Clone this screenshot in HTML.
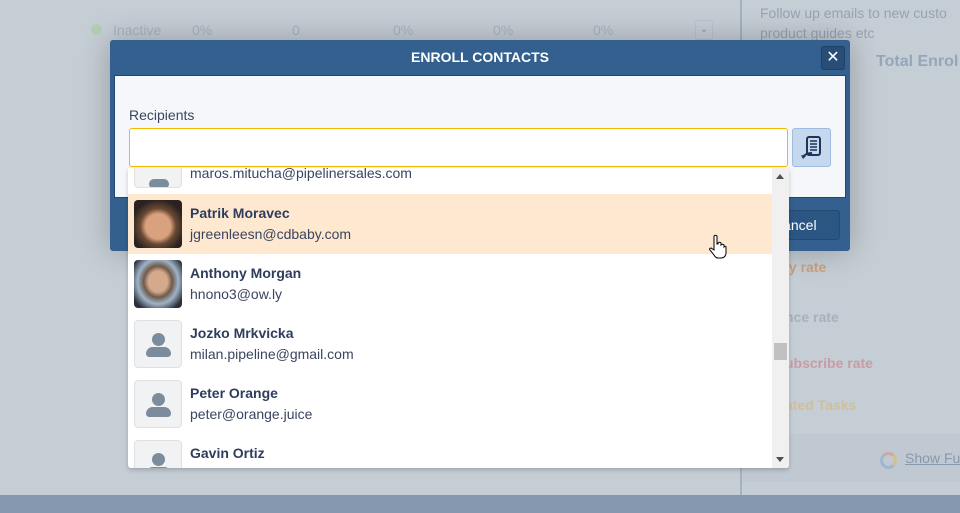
<!DOCTYPE html>
<html><head><meta charset="utf-8"><style>
*{margin:0;padding:0;box-sizing:border-box}
body{width:960px;height:513px;overflow:hidden;background:#c5cdd5;font-family:"Liberation Sans",sans-serif;position:relative}
.abs{position:absolute;white-space:nowrap}
.t{color:#a8b3bf;font-size:14px}
.item{position:absolute;left:0;width:644px;height:60px}
.av{position:absolute;left:6px;top:6px;width:48px;height:48px;border-radius:4px;background:#f1f2f3;border:1px solid #dfe1e3;overflow:hidden}
.nm{position:absolute;left:62px;top:11px;font-weight:bold;font-size:14px;color:#2f3d5c}
.em{position:absolute;left:62px;top:32px;font-size:14px;color:#3a4560}
</style></head><body>
<div class="abs" style="left:91px;top:24px;width:11px;height:11px;border-radius:50%;background:#b5cdb5"></div>
<div class="abs t" style="left:113px;top:22px">Inactive</div>
<div class="abs t" style="left:192px;top:22px">0%</div>
<div class="abs t" style="left:292px;top:22px">0</div>
<div class="abs t" style="left:393px;top:22px">0%</div>
<div class="abs t" style="left:493px;top:22px">0%</div>
<div class="abs t" style="left:593px;top:22px">0%</div>
<div class="abs" style="left:695px;top:20px;width:18px;height:20px;border:1px solid #b9c2cc;border-radius:3px;color:#8896a6;font-size:10px;text-align:center;line-height:18px">⌄</div>
<div class="abs" style="left:740px;top:0;width:2px;height:495px;background:#a3b1c1"></div>
<div class="abs" style="left:760px;top:3px;color:#98a3b0;font-size:14px;line-height:20px">Follow up emails to new custo<br>product guides etc</div>
<div class="abs" style="left:876px;top:53px;color:#95a6ba;font-size:16px;font-weight:bold">Total Enrol</div>
<div class="abs" style="left:785px;top:259px;color:#c9a07e;font-size:14px;font-weight:bold">ly rate</div>
<div class="abs" style="left:785px;top:309px;color:#a8b0ba;font-size:14px;font-weight:bold">nce rate</div>
<div class="abs" style="left:785px;top:355px;color:#c89ca4;font-size:14px;font-weight:bold">ubscribe rate</div>
<div class="abs" style="left:785px;top:397px;color:#d0c09a;font-size:14px;font-weight:bold">ated Tasks</div>
<div class="abs" style="left:742px;top:434px;width:218px;height:48px;background:#c0c8d2"></div>
<div class="abs" style="left:880px;top:452px;width:17px;height:17px;border-radius:50%;border:3px solid #9fb6cf;border-top-color:#cfa7a0;border-right-color:#d4c089"></div>
<div class="abs" style="left:905px;top:450px;color:#8898ad;font-size:14px;text-decoration:underline">Show Fu</div>
<div class="abs" style="left:0;top:495px;width:960px;height:18px;background:#8598b0"></div>
<div class="abs" style="left:110px;top:40px;width:740px;height:211px;background:#33608e;border-radius:3px;box-shadow:0 0 30px rgba(0,0,0,.25)"></div>
<div class="abs" style="left:110px;top:40px;width:740px;height:34px;line-height:34px;text-align:center;color:#fff;font-size:14px;font-weight:bold">ENROLL CONTACTS</div>
<div class="abs" style="left:821px;top:46px;width:24px;height:24px;background:#284e78;border:1px solid #1f3f63;border-radius:3px;color:#fff;text-align:center;line-height:22px;font-size:16px">✕</div>
<div class="abs" style="left:114px;top:75px;width:732px;height:123px;background:#f5f7fb;border:1px solid #23466d"></div>
<div class="abs" style="left:129px;top:107px;color:#3a4560;font-size:14px">Recipients</div>
<div class="abs" style="left:129px;top:128px;width:659px;height:39px;background:#fff;border:1px solid #f3b800;border-radius:3px"></div>
<div class="abs" style="left:792px;top:128px;width:39px;height:39px;background:#c5d8ee;border:1px solid #9ebde0;border-radius:3px">
<svg width="37" height="37" viewBox="0 0 37 37"><rect x="14" y="8" width="13" height="18" rx="2" fill="none" stroke="#1d3557" stroke-width="2"/><path d="M17 12h7M17 15h7M17 18h7M17 21h7" stroke="#1d3557" stroke-width="1.5"/><path d="M19 24c-4 0-7 1-9 4" fill="none" stroke="#1d3557" stroke-width="2"/><path d="M8 26l2 4 3-3z" fill="#1d3557"/></svg></div>
<div class="abs" style="left:770px;top:210px;width:70px;height:30px;background:#2b5582;border:1px solid #244a73;border-radius:3px;color:#fff;font-size:14px;line-height:28px;padding-left:2px">Cancel</div>
<div class="abs" style="left:128px;top:168px;width:661px;height:300px;background:#fff;overflow:hidden;border-radius:0 0 3px 3px;box-shadow:0 2px 5px rgba(0,0,0,.2)">
 <div class="item" style="top:-34px"><div class="av"><div style="position:absolute;left:14px;top:38px;width:20px;height:10px;border-radius:6px;background:#7b8d9c"></div></div><div class="em" style="top:31px">maros.mitucha@pipelinersales.com</div></div>
 <div class="item" style="top:26px;background:#fee8cf"><div class="av" style="background:radial-gradient(circle at 50% 55%,#d9a17e 0 35%,#6b4a33 50%,#2a2220 75%);border:none"></div><div class="nm">Patrik Moravec</div><div class="em">jgreenleesn@cdbaby.com</div></div>
 <div class="item" style="top:86px"><div class="av" style="background:radial-gradient(ellipse at 50% 45%,#d5a98c 0 28%,#6e5a4a 42%,#9fb3c8 60%,#2b2f38 85%);border:none"></div><div class="nm">Anthony Morgan</div><div class="em">hnono3@ow.ly</div></div>
 <div class="item" style="top:146px"><div class="av"><div style="position:absolute;left:17px;top:12px;width:13px;height:13px;border-radius:50%;background:#7b8d9c"></div><div style="position:absolute;left:11px;top:26px;width:25px;height:10px;border-radius:8px 8px 4px 4px;background:#7b8d9c"></div></div><div class="nm">Jozko Mrkvicka</div><div class="em">milan.pipeline@gmail.com</div></div>
 <div class="item" style="top:206px"><div class="av"><div style="position:absolute;left:17px;top:12px;width:13px;height:13px;border-radius:50%;background:#7b8d9c"></div><div style="position:absolute;left:11px;top:26px;width:25px;height:10px;border-radius:8px 8px 4px 4px;background:#7b8d9c"></div></div><div class="nm">Peter Orange</div><div class="em">peter@orange.juice</div></div>
 <div class="item" style="top:266px"><div class="av"><div style="position:absolute;left:17px;top:12px;width:13px;height:13px;border-radius:50%;background:#7b8d9c"></div><div style="position:absolute;left:11px;top:26px;width:25px;height:10px;border-radius:8px 8px 4px 4px;background:#7b8d9c"></div></div><div class="nm">Gavin Ortiz</div></div>
 <div class="abs" style="left:644px;top:0;width:17px;height:300px;background:#f0f0f0"></div>
 <div class="abs" style="left:648px;top:6px;width:0;height:0;border:4px solid transparent;border-bottom:5px solid #505050;border-top:none"></div>
 <div class="abs" style="left:648px;top:289px;width:0;height:0;border:4px solid transparent;border-top:5px solid #505050;border-bottom:none"></div>
 <div class="abs" style="left:646px;top:175px;width:13px;height:17px;background:#c1c1c1"></div>
</div>
<svg class="abs" style="left:708px;top:234px" width="20" height="26" viewBox="0 0 20 26"><path d="M6 2c1-1 2-1 3 0v8h1V9c1-1 2-1 3 0v2h0c1-1 2-1 3 0v2c1-1 2-1 2 0v6c0 3-2 5-5 5h-3c-2 0-3-1-4-3l-4-5c-1-1 0-2 1-2l3 2V2z" fill="#fff" stroke="#000" stroke-width="1"/></svg>
</body></html>
